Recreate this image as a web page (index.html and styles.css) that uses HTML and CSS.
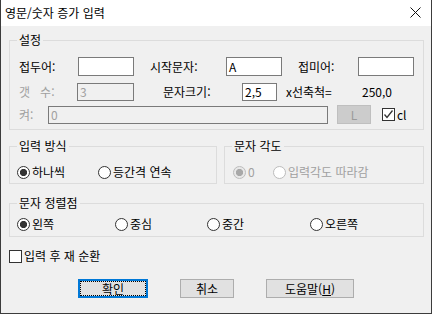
FILE: index.html
```html
<!DOCTYPE html>
<html lang="ko">
<head>
<meta charset="utf-8">
<link rel="stylesheet" href="styles.css">
</head>
<body>
<div class="window">
  <div class="titlebar">
    <span class="title">영문/숫자 증가 입력</span>
    <svg class="close" width="11" height="11" viewBox="0 0 11 11"><path d="M0.5 0.5 L10.5 10.5 M10.5 0.5 L0.5 10.5" stroke="#111" stroke-width="1"/></svg>
  </div>
  <div class="body">
    <fieldset class="group g-setup">
      <legend>설정</legend>
      <div class="row r1">
        <span class="lbl w59">접두어:</span>
        <span class="edit w56 h19"></span>
        <span class="lbl w92 pl16">시작문자:</span>
        <span class="edit w56 h19">A</span>
        <span class="lbl w76 pl16">접미어:</span>
        <span class="edit w56 h19"></span>
      </div>
      <div class="row r2">
        <span class="lbl w58 dis">갯&nbsp;&nbsp;&nbsp;수:</span>
        <span class="edit w57 h18 off">3</span>
        <span class="lbl w108 pl29">문자크기:</span>
        <span class="edit w35 h18">2,5</span>
        <span class="lbl w85 pl9">x선축척=</span>
        <span class="lbl">250,0</span>
      </div>
      <div class="row r3">
        <span class="lbl w29 dis">켜:</span>
        <span class="edit w280 h18 off">0</span>
        <span class="btn-l">L</span>
        <span class="check on"><svg width="11" height="11" viewBox="0 0 11 11"><path d="M1.5 5.5 L4 8.5 L9.5 1.5" fill="none" stroke="#333" stroke-width="1.3"/></svg></span>
        <span class="lbl cl">cl</span>
      </div>
    </fieldset>

    <div class="pair">
      <fieldset class="group g-mode">
        <legend>입력 방식</legend>
        <div class="optrow">
          <span class="opt m1"><span class="radio on"></span>하나씩</span>
          <span class="opt"><span class="radio"></span>등간격 연속</span>
        </div>
      </fieldset>
      <fieldset class="group g-angle">
        <legend>문자 각도</legend>
        <div class="optrow">
          <span class="opt dis n1"><span class="radio on off"></span>0</span>
          <span class="opt dis"><span class="radio off"></span>입력각도 따라감</span>
        </div>
      </fieldset>
    </div>

    <fieldset class="group g-align">
      <legend>문자 정렬점</legend>
      <div class="optrow">
        <span class="opt a1"><span class="radio on"></span>왼쪽</span>
        <span class="opt a2"><span class="radio"></span>중심</span>
        <span class="opt a3"><span class="radio"></span>중간</span>
        <span class="opt"><span class="radio"></span>오른쪽</span>
      </div>
    </fieldset>

    <div class="cycle">
      <span class="check"></span>
      <span class="lbl">입력 후 재 순환</span>
    </div>

    <div class="buttons">
      <button class="btn ok">확인</button>
      <button class="btn cancel">취소</button>
      <button class="btn help">도움말(<u>H</u>)</button>
    </div>
  </div>
</div>
</body>
</html>
```

FILE: styles.css
```css
* { box-sizing: border-box; }
html, body { margin: 0; padding: 0; background: #fff; }
body {
  font-family: "Noto Sans CJK KR", "Noto Sans", sans-serif;
  font-size: 12px;
  line-height: 16px;
  color: #000;
}
.window {
  width: 432px;
  height: 314px;
  border-left: 1px solid #3c3c3c;
  border-right: 1px solid #3c3c3c;
  border-bottom: 1px solid #3c3c3c;
  background: #f0f0f0;
  display: flex;
  flex-direction: column;
}
.titlebar {
  height: 26px;
  background: #fff;
  display: flex;
  align-items: center;
  justify-content: space-between;
  padding: 0 10px 0 4px;
}
.title { font-size: 12px; }
.close { display: block; margin-top: -1px; }
.body {
  flex: 1;
  padding-left: 8px;
}
.group {
  border: 1px solid #dcdcdc;
  margin: 0;
  padding: 0;
  min-width: 0;
}
.group legend {
  padding: 0 2px;
  margin-left: 7px;
  line-height: 16px;
  font-size: 12px;
}
.g-setup { width: 415px; margin-top: 6px; padding-top: 6px; }
.row { display: flex; align-items: center; padding-left: 9px; }
.r1, .r2 { height: 25px; }
.r3 { height: 21px; margin-bottom: 4px; }
.lbl { white-space: nowrap; flex: none; }
.dis { color: #a0a0a0; }
.w29 { width: 29px; }
.w58 { width: 58px; }
.w59 { width: 59px; }
.w76 { width: 76px; }
.w85 { width: 85px; }
.w92 { width: 92px; }
.w108 { width: 108px; }
.pl9 { padding-left: 9px; }
.pl16 { padding-left: 16px; }
.pl29 { padding-left: 29px; }
.edit {
  flex: none;
  display: flex;
  align-items: center;
  border: 1px solid #7a7a7a;
  background: #fff;
  padding-left: 2px;
  line-height: 14px;
}
.edit.off { background: #f0f0f0; color: #a0a0a0; }
.w35 { width: 35px; }
.w56 { width: 56px; }
.w57 { width: 57px; }
.w280 { width: 280px; }
.h18 { height: 18px; }
.h19 { height: 19px; }
.btn-l {
  flex: none;
  margin-left: 9px;
  width: 34px;
  height: 19px;
  background: #cccccc;
  border: 1px solid #bfbfbf;
  color: #9a9a9a;
  display: flex;
  align-items: center;
  justify-content: center;
}
.check {
  flex: none;
  width: 13px;
  height: 13px;
  border: 1px solid #333;
  background: #fff;
  display: flex;
  align-items: center;
  justify-content: center;
}
.r3 .check { margin-left: 11px; }
.cl { margin-left: 2px; }

.pair { display: flex; gap: 7px; margin-top: 8px; }
.g-mode { width: 208px; }
.g-angle { width: 200px; }
.optrow { display: flex; align-items: center; height: 16px; margin-top: 10px; margin-bottom: 3px; }
.opt { display: flex; align-items: center; white-space: nowrap; flex: none; }
.radio {
  width: 13px;
  height: 13px;
  border-radius: 50%;
  border: 1px solid #333;
  background: #fff;
  margin-right: 2px;
  flex: none;
}
.radio.on { background: radial-gradient(circle, #333 0 3.3px, #fff 3.9px); }
.radio.off { border-color: #bcbcbc; }
.radio.on.off { background: radial-gradient(circle, #a8a8a8 0 3.3px, #e8e8e8 3.9px); }
.g-mode .optrow { padding-left: 7px; }
.m1 { width: 81px; }
.g-angle .optrow { padding-left: 8px; }
.n1 { width: 40px; }

.g-align { width: 415px; margin-top: 11px; }
.g-align .optrow { margin-top: 5px; margin-bottom: 4px; padding-left: 7px; }
.a1 { width: 98px; }
.a2 { width: 92px; }
.a3 { width: 103px; }

.cycle { display: flex; align-items: center; height: 16px; margin-top: 11px; }
.cycle .check { margin-right: 2px; }

.buttons { display: flex; gap: 32px; margin-top: 15px; padding-left: 69px; }
.btn {
  font-family: inherit;
  font-size: 12px;
  line-height: 14px;
  height: 19px;
  padding: 0;
  background: #e1e1e1;
  border: 1px solid #adadad;
  color: #000;
  border-radius: 0;
}
.ok { width: 70px; border: 2px solid #0078d7; outline: 1px dotted #000; outline-offset: -3px; }
.cancel { width: 54px; }
.help { width: 88px; }
```
